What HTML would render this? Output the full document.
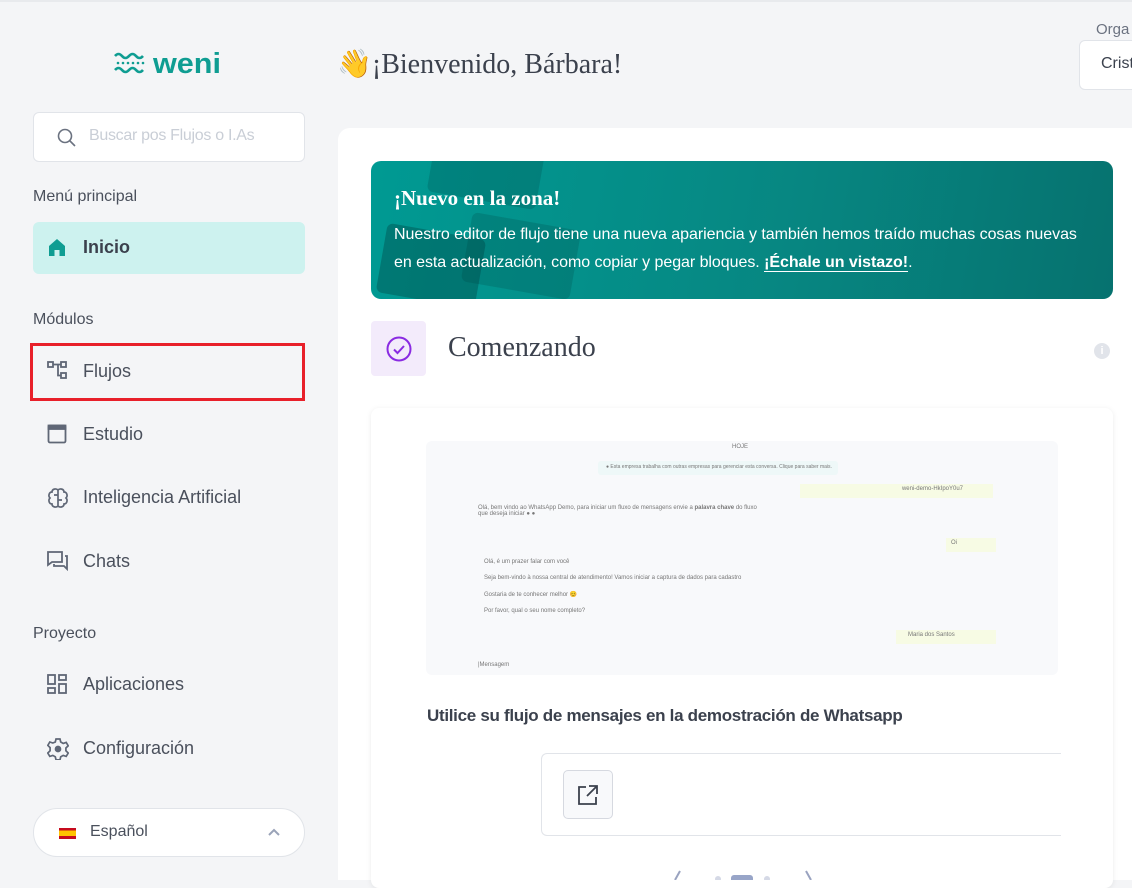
<!DOCTYPE html>
<html><head><meta charset="utf-8"><style>
*{box-sizing:border-box;margin:0;padding:0}
body{width:1132px;height:880px;overflow:hidden;background:#f4f5f7;font-family:"Liberation Sans",sans-serif;color:#3b414d;position:relative}
.abs{position:absolute}
.topline{left:0;top:0;width:1132px;height:2px;background:#e8eaed}
.search{left:33px;top:112px;width:272px;height:50px;background:#fff;border:1px solid #e1e4e9;border-radius:6px}
.search span{position:absolute;left:55px;top:14px;font-size:16px;color:#c9ced6;letter-spacing:-.3px}
.lbl{font-size:16px;color:#4a505c;left:33px}
.item{left:33px;width:272px;height:52px;font-size:18px;color:#4a505c}
.item svg{position:absolute;left:14px;top:15px}
.item span{position:absolute;left:50px;top:15px}
.lang{left:33px;top:808px;width:272px;height:49px;background:#fff;border:1px solid #e1e4e9;border-radius:25px}
.panel{left:338px;top:128px;width:794px;height:752px;background:#fff;border-radius:12px 0 0 0}
.banner{left:371px;top:161px;width:742px;height:138px;border-radius:10px;background:linear-gradient(100deg,#009a93 0%,#078782 55%,#06726f 100%);overflow:hidden;color:#fff}
.card{left:371px;top:408px;width:742px;height:480px;background:#fff;border-radius:8px;box-shadow:0 1px 6px rgba(0,0,0,.08)}
.wa{left:426px;top:441px;width:632px;height:234px;background:#f8f9fb;border-radius:6px;font-size:6px;color:#777}
</style></head><body>
<div class="abs topline"></div>
<!-- logo -->
<svg class="abs" style="left:114px;top:51px" width="110" height="24" viewBox="0 0 110 24">
<g fill="none" stroke="#0f9d92" stroke-width="2.6">
<path d="M1 5 q3.5-4 7 0 t7 0 t7 0 t7 0"/><path d="M1 19 q3.5-4 7 0 t7 0 t7 0 t7 0"/></g>
<g fill="#0f9d92"><circle cx="4" cy="12" r="1.3"/><circle cx="9" cy="12" r="1.3"/><circle cx="14" cy="12" r="1.3"/><circle cx="19" cy="12" r="1.3"/><circle cx="24" cy="12" r="1.3"/><circle cx="29" cy="12" r="1.3"/></g>
<text x="39" y="22" font-family="Liberation Sans" font-size="29" font-weight="bold" fill="#0f9d92" textLength="68" lengthAdjust="spacingAndGlyphs">weni</text>
</svg>
<div class="abs search"><svg style="position:absolute;left:23px;top:15px" width="20" height="20" viewBox="0 0 20 20" fill="none" stroke="#6b7280" stroke-width="1.6"><circle cx="8" cy="8" r="6.5"/><path d="M13 13l5 5"/></svg><span>Buscar pos Flujos o I.As</span></div>
<div class="abs lbl" style="top:188px">Menú principal</div>
<div class="abs item" style="top:222px;background:#cdf2ef;border-radius:6px;font-weight:bold;color:#3b414d"><svg width="20" height="20" viewBox="0 0 20 20"><path d="M2 9 L10 2 L18 9 V19 H12.5 V13 H7.5 V19 H2Z" fill="#0f9d92"/></svg><span>Inicio</span></div>
<div class="abs lbl" style="top:311px">Módulos</div>
<div class="abs" style="left:30px;top:343px;width:275px;height:58px;border:3px solid #e8202a"></div>
<div class="abs item" style="top:346px"><svg width="22" height="20" viewBox="0 0 22 20" fill="none" stroke="#5f6776" stroke-width="1.8"><rect x="1" y="1" width="5" height="5"/><rect x="14" y="1" width="5" height="5"/><rect x="14" y="12" width="5" height="5"/><path d="M6 3.5h8M11 3.5v11h3"/></svg><span>Flujos</span></div>
<div class="abs item" style="top:409px"><svg width="20" height="20" viewBox="0 0 20 20" fill="none" stroke="#5f6776" stroke-width="1.8"><rect x="1.5" y="1.5" width="17" height="17" rx="1.5"/><rect x="1.5" y="1.5" width="17" height="3.5" fill="#5f6776"/></svg><span>Estudio</span></div>
<div class="abs item" style="top:472px"><svg width="22" height="22" viewBox="0 0 22 22" fill="none" stroke="#5f6776" stroke-width="1.7"><path d="M11 3c-2-2-6-1-6 2-3 0-4 4-2 6-2 2-1 6 2 6 0 3 4 4 6 2 2 2 6 1 6-2 3 0 4-4 2-6 2-2 1-6-2-6 0-3-4-4-6-2zM11 3v16M7 8h4M11 13h4"/></svg><span>Inteligencia Artificial</span></div>
<div class="abs item" style="top:536px"><svg width="22" height="20" viewBox="0 0 22 20" fill="none" stroke="#5f6776" stroke-width="1.8"><path d="M1 1h14v10H5l-4 3z"/><path d="M18 5h2v13l-3-3H7v-2"/></svg><span>Chats</span></div>
<div class="abs lbl" style="top:625px">Proyecto</div>
<div class="abs item" style="top:659px"><svg width="20" height="20" viewBox="0 0 20 20" fill="none" stroke="#5f6776" stroke-width="1.8"><rect x="1" y="1" width="7" height="9"/><rect x="12" y="1" width="7" height="5"/><rect x="1" y="14" width="7" height="5"/><rect x="12" y="10" width="7" height="9"/></svg><span>Aplicaciones</span></div>
<div class="abs item" style="top:723px"><svg width="22" height="22" viewBox="0 0 22 22" fill="none" stroke="#5f6776" stroke-width="1.7"><path d="M9 1h4l.7 3 2.5 1.4 3-1 2 3.4-2.3 2.2v2.8l2.3 2.2-2 3.4-3-1-2.5 1.4-.7 3H9l-.7-3-2.5-1.4-3 1-2-3.4 2.3-2.2V9.6L.8 7.4l2-3.4 3 1L8.3 4z"/><circle cx="11" cy="11" r="2.5" fill="#5f6776"/></svg><span>Configuración</span></div>
<div class="abs lang"><div style="position:absolute;left:25px;top:19px;width:17px;height:11px;background:linear-gradient(#c60b1e 0 25%,#ffc400 25% 75%,#c60b1e 75%)"></div><span style="position:absolute;left:56px;top:14px;font-size:16px;color:#4a505c">Español</span><svg style="position:absolute;left:234px;top:19px" width="12" height="8" viewBox="0 0 12 8" fill="none" stroke="#9aa3b8" stroke-width="2"><path d="M1 7l5-5 5 5"/></svg></div>
<!-- header -->
<div class="abs" style="left:337px;top:47px;font-family:'Liberation Serif',serif;font-size:28px;color:#3b414d">👋¡Bienvenido, Bárbara!</div>
<div class="abs" style="left:1096px;top:21px;font-size:15px;color:#6b7280">Orga</div>
<div class="abs" style="left:1079px;top:40px;width:60px;height:50px;background:#fff;border:1px solid #e1e4e9;border-radius:6px"><span style="position:absolute;left:21px;top:14px;font-size:16px;color:#3b414d">Crist</span></div>
<div class="abs panel"></div>
<div class="abs banner">
<div style="position:absolute;left:60px;top:-20px;width:110px;height:60px;background:rgba(0,70,70,.25);transform:rotate(10deg);border-radius:6px"></div>
<div style="position:absolute;left:10px;top:70px;width:100px;height:70px;background:rgba(0,60,60,.35);transform:rotate(10deg);border-radius:6px"></div>
<div style="position:absolute;left:95px;top:60px;width:110px;height:70px;background:rgba(0,60,60,.2);transform:rotate(10deg);border-radius:6px"></div>
<div style="position:absolute;left:23px;top:25px;font-family:'Liberation Serif',serif;font-weight:bold;font-size:21px">¡Nuevo en la zona!</div>
<div style="position:absolute;left:23px;top:60px;font-size:16px;line-height:28px;letter-spacing:-.05px;width:720px;white-space:nowrap">Nuestro editor de flujo tiene una nueva apariencia y también hemos traído muchas cosas nuevas<br>en esta actualización, como copiar y pegar bloques. <b style="border-bottom:1.5px solid #fff">¡Échale un vistazo!</b>.</div>
</div>
<div class="abs" style="left:371px;top:321px;width:55px;height:55px;background:#f3ebfb;border-radius:4px"><svg style="position:absolute;left:15px;top:15px" width="26" height="26" viewBox="0 0 26 26" fill="none" stroke="#8a2be2" stroke-width="2"><circle cx="13" cy="13" r="11.5"/><path d="M8 13.5l3.5 3.5 6.5-7"/></svg></div>
<div class="abs" style="left:448px;top:332px;font-family:'Liberation Serif',serif;font-size:28px;color:#3b414d">Comenzando</div>
<div class="abs" style="left:1094px;top:343px;width:16px;height:16px;border-radius:50%;background:#e1e4ea;color:#fff;font-size:11px;font-weight:bold;text-align:center;line-height:16px">i</div>
<div class="abs card"></div>
<div class="abs wa">
<div style="position:absolute;left:306px;top:3px">HOJE</div>
<div style="position:absolute;left:172px;top:20px;width:240px;height:14px;background:#eef8f8;border-radius:3px;padding:3px 8px;white-space:nowrap;font-size:5px">● Esta empresa trabalha com outras empresas para gerenciar esta conversa. Clique para saber mais.</div>
<div style="position:absolute;left:374px;top:43px;width:193px;height:14px;background:#f7fbe4;text-align:right;padding:2px 30px 0 0">weni-demo-HkIpoY0u7</div>
<div style="position:absolute;left:52px;top:64px;width:290px">Olá, bem vindo ao WhatsApp Demo, para iniciar um fluxo de mensagens envie a <b>palavra chave</b> do fluxo que deseja iniciar ● ●</div>
<div style="position:absolute;left:520px;top:97px;width:50px;height:14px;background:#f7fbe4;padding:2px 0 0 5px">Oi</div>
<div style="position:absolute;left:58px;top:118px">Olá, é um prazer falar com você</div>
<div style="position:absolute;left:58px;top:134px">Seja bem-vindo à nossa central de atendimento! Vamos iniciar a captura de dados para cadastro</div>
<div style="position:absolute;left:58px;top:150px">Gostaria de te conhecer melhor 😊</div>
<div style="position:absolute;left:58px;top:167px">Por favor, qual o seu nome completo?</div>
<div style="position:absolute;left:470px;top:189px;width:100px;height:14px;background:#f7fbe4;padding:2px 0 0 12px">Maria dos Santos</div>
<div style="position:absolute;left:52px;top:221px">|Mensagem</div>
</div>
<div class="abs" style="left:427px;top:706px;font-size:17px;font-weight:bold;color:#3b414d;letter-spacing:-.3px">Utilice su flujo de mensajes en la demostración de Whatsapp</div>
<div class="abs" style="left:541px;top:753px;width:520px;height:83px;border:1px solid #e1e4e9;border-right:none;border-radius:6px 0 0 6px"></div>
<div class="abs" style="left:563px;top:770px;width:50px;height:49px;border:1px solid #d6d9e0;border-radius:5px;background:#f8f9fb"><svg style="position:absolute;left:13px;top:13px" width="22" height="22" viewBox="0 0 22 22" fill="none" stroke="#3b414d" stroke-width="1.8"><path d="M9 3H2v17h17v-7M12 2h8v8M20 2L10 12"/></svg></div>
<svg class="abs" style="left:668px;top:866px" width="150" height="14" viewBox="0 0 150 14"><path d="M12 5l-5 9M138 5l5 9" stroke="#9aa3c0" stroke-width="2" fill="none"/><circle cx="50" cy="13" r="3" fill="#d5d9e6"/><circle cx="99" cy="13" r="3" fill="#d5d9e6"/><rect x="63" y="9" width="22" height="8" rx="3" fill="#98a5c8"/></svg>
</body></html>
